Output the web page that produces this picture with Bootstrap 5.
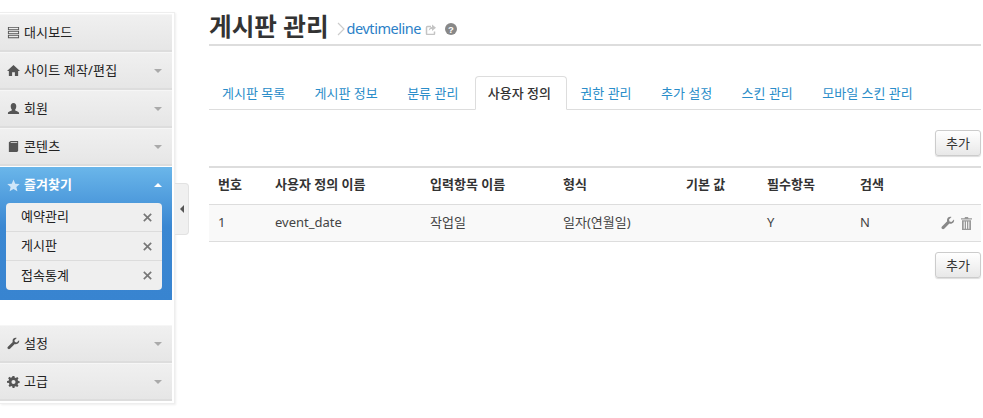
<!DOCTYPE html>
<html lang="ko">
<head>
<meta charset="UTF-8">
<title>게시판 관리</title>
<link href="https://cdn.jsdelivr.net/npm/bootstrap@5.3.2/dist/css/bootstrap.min.css" rel="stylesheet">
<style>
  body { font-family: "Noto Sans", "Noto Sans CJK KR", sans-serif; font-size: 13px; color: #333; background: #fff; height: 418px; overflow: hidden; }
  .page-wrap { height: 418px; }
  .side-col { width: 175px; flex: none; margin-top: 12px; height: 392px; padding: 1px 2px 3px 0; border-right: 1px solid #eee; border-bottom: 1px solid #eee; border-top: 1px solid #eee; box-shadow: 1px 1px 2px #eee; }
  .side-item { height: 38px; padding: 0 10px 0 7px; background: linear-gradient(#f0f0f0, #e6e6e6); border-bottom: 2px solid #ddd; border-top: 1px solid #f6f6f6; color: #222; font-size: 13px; letter-spacing: .15px; }
  .side-item svg { width: 13px; height: 13px; fill: #555; margin-right: 4px; flex: none; }
  .caret-down { width: 0; height: 0; border-left: 4px solid transparent; border-right: 4px solid transparent; border-top: 4px solid #aaa; }
  .caret-up { width: 0; height: 0; border-left: 4px solid transparent; border-right: 4px solid transparent; border-bottom: 4px solid #fff; }
  .fav-box { height: 133px; background: linear-gradient(#6ab6ea, #3a87d2 45%, #3884d0); padding: 0 10px 0 6px; margin-top: 1px; }
  .fav-head { height: 36px; padding: 0 0 0 1px; color: #fff; font-weight: 700; }
  .fav-head svg { width: 13px; height: 13px; fill: #cfe6f8; margin-right: 4px; }
  .fav-list { background: #efefef; border-radius: 4px; }
  .fav-row { height: 29px; padding: 0 10px 0 15px; border-bottom: 1px solid #dcdcdc; color: #222; }
  .fav-row:last-child { border-bottom: 0; }
  .fav-row svg { width: 9px; height: 9px; stroke: #777; stroke-width: 2; }
  .side-gap { height: 25px; }
  .fold-btn { width: 14px; height: 52px; margin-top: 183px; flex: none; background: #f0f0f0; border: 1px solid #e2e2e2; border-left: 0; border-radius: 0 4px 4px 0; }
  .fold-btn i { display: block; width: 0; height: 0; border-top: 4px solid transparent; border-bottom: 4px solid transparent; border-right: 4px solid #555; }
  .main-col { width: 772px; margin-left: 20px; flex: none; }
  .title-bar { height: 34px; margin-top: 12px; padding-bottom: 2px; border-bottom: 2px solid #ddd; }
  .title-bar h1 { font-size: 24.6px; font-weight: 700; margin: 0 4px 0 0; color: #333; line-height: 30px; }
  .title-link { color: #2b7fc7; font-size: 14.5px; text-decoration: none; letter-spacing: -0.45px; margin: 4px 0 0 -2px; }
  .title-bar svg { flex: none; margin-top: 4px; }
  .help-icon { margin-left: 5px; }
  .tab-strip { margin-top: 30px; height: 34px; border-bottom: 1px solid #ddd; flex-wrap: nowrap; }
  .tab-strip .nav-link { height: 34px; padding: 6px 15px 0 12px; margin-right: .4px; color: #2a8dc9; font-size: 13px; border-radius: 4px 4px 0 0; line-height: 20px; white-space: nowrap; }
  .tab-strip .nav-link.active { color: #333; font-weight: 500; border-color: #ddd #ddd #fff; }
  .add-btn { font-size: 13px; padding: 0; width: 46px; height: 26px; line-height: 24px; color: #333; background: linear-gradient(#fff, #e8e8e8); border: 1px solid #ccc; border-radius: 3px; box-shadow: 0 1px 1px #ddd; }
  .top-tools { margin-top: 20px; height: 36px; }
  .bottom-tools { margin-top: 10px; }
  .field-table { table-layout: fixed; width: 772px; margin: 0; border-top: 2px solid #ddd; font-size: 13px; }
  .field-table th { height: 37px; padding: 0 9px 2px; font-weight: 700; color: #333; border-bottom: 1px solid #ddd; vertical-align: middle; }
  .field-table td { height: 37px; padding: 0 9px; background: #f9f9f9; color: #444; border-bottom: 1px solid #ddd; vertical-align: middle; box-shadow: none; }
  .act-wrench { width: 14px; height: 14px; fill: #888; margin-right: 3px; }
  .act-trash { width: 11px; height: 13px; fill: #999; }
</style>
</head>
<body>
<div class="page-wrap d-flex">
  <div class="side-col">
    <div class="side-item d-flex align-items-center">
      <svg viewBox="0 0 14 14"><path fill-rule="evenodd" d="M1 1h12v3.500H1zM2 2v1.500h10V2zM1 5.300h12v3.500H1zM2 6.300v1.500h10V6.300zM1 9.600h12v3.500H1zM2 10.600v1.500h10v-1.500z"/></svg><span>대시보드</span>
    </div>
    <div class="side-item d-flex align-items-center justify-content-between">
      <span class="d-flex align-items-center"><svg viewBox="0 0 14 14"><path d="M7 1 0 7.500h2V13h3.500V9h3v4H12V7.500h2z"/></svg>사이트 제작/편집</span><i class="caret-down"></i>
    </div>
    <div class="side-item d-flex align-items-center justify-content-between">
      <span class="d-flex align-items-center"><svg viewBox="0 0 14 14"><path d="M7 1c2 0 3 1.500 3 3.500S9 8 8.500 8.500c.5 1 4.500 1.500 4.500 3.500v1H1v-1c0-2 4-2.500 4.500-3.500C5 8 4 6.500 4 4.500S5 1 7 1z"/></svg>회원</span><i class="caret-down"></i>
    </div>
    <div class="side-item d-flex align-items-center justify-content-between">
      <span class="d-flex align-items-center"><svg viewBox="0 0 14 14"><path d="M2 2.500 4 1h8v10.500L11 13H2zM3.500 3H11v-.8H4.500z" fill-rule="evenodd"/></svg>콘텐츠</span><i class="caret-down"></i>
    </div>
    <div class="fav-box">
      <div class="fav-head d-flex align-items-center justify-content-between">
        <span class="d-flex align-items-center"><svg viewBox="0 0 14 14"><path d="m7 .5 1.900 4.500 4.800.4-3.600 3.200 1.100 4.700L7 10.800l-4.200 2.500 1.100-4.700L.3 5.400 5.100 5z"/></svg>즐겨찾기</span><i class="caret-up"></i>
      </div>
      <div class="fav-list">
        <div class="fav-row d-flex align-items-center justify-content-between"><span>예약관리</span><svg viewBox="0 0 11 11"><path d="m1 1 9 9M10 1l-9 9"/></svg></div>
        <div class="fav-row d-flex align-items-center justify-content-between"><span>게시판</span><svg viewBox="0 0 11 11"><path d="m1 1 9 9M10 1l-9 9"/></svg></div>
        <div class="fav-row d-flex align-items-center justify-content-between"><span>접속통계</span><svg viewBox="0 0 11 11"><path d="m1 1 9 9M10 1l-9 9"/></svg></div>
      </div>
    </div>
    <div class="side-gap"></div>
    <div class="side-item d-flex align-items-center justify-content-between">
      <span class="d-flex align-items-center"><svg viewBox="0 0 14 14"><path d="M13 3.500 10.500 6 8.500 5.500 8 3.500 10.500 1C8.500.2 6 1.500 6 4c0 .5 0 1 .2 1.300L1 10.500c-.7.7-.7 1.600 0 2.200s1.500.6 2.200 0L8.400 7.500C11 8.500 13.800 6 13 3.500z"/></svg>설정</span><i class="caret-down"></i>
    </div>
    <div class="side-item d-flex align-items-center justify-content-between">
      <span class="d-flex align-items-center"><svg viewBox="0 0 14 14"><path fill-rule="evenodd" d="M6 1h2l.3 1.700 1.200.5L11 2.200l1.400 1.400-1 1.500.5 1.200 1.700.3v2l-1.700.3-.5 1.200 1 1.500-1.400 1.400-1.500-1-1.200.5L8 14H6l-.3-1.700-1.200-.5-1.500 1-1.400-1.400 1-1.500-.5-1.200L0 8.400v-2l1.700-.3.500-1.200-1-1.500 1.400-1.400 1.500 1 1.200-.5zM7 5.300a2.200 2.200 0 1 0 0 4.400 2.200 2.200 0 0 0 0-4.400z"/></svg>고급</span><i class="caret-down"></i>
    </div>
  </div>
  <div class="fold-btn d-flex align-items-center justify-content-center"><i></i></div>
  <div class="main-col">
    <div class="title-bar d-flex align-items-center gap-1">
      <h1>게시판 관리</h1>
      <svg width="8" height="14" viewBox="0 0 8 14"><path d="m1 1 6 6-6 6" fill="none" stroke="#ccc" stroke-width="1.200"/></svg>
      <a class="title-link" href="#">devtimeline</a>
      <svg width="11" height="11" viewBox="0 0 11 11"><path d="M6 2.500H2.500a1 1 0 0 0-1 1v6a1 1 0 0 0 1 1h6a1 1 0 0 0 1-1V7.500" fill="none" stroke="#c4c4c4" stroke-width="1.500"/><path d="M7 .5l4 3.200-4 3.200V5C5.500 5 4.500 5.500 3.800 7c0-2.500 1.200-3.800 3.200-4z" fill="#c4c4c4"/></svg>
      <svg class="help-icon" width="12" height="12" viewBox="0 0 12 12"><circle cx="6" cy="6" r="6" fill="#888"/><text x="6" y="9.500" text-anchor="middle" font-size="9.500" font-weight="700" fill="#fff" font-family="Liberation Sans, sans-serif">?</text></svg>
    </div>
    <ul class="nav nav-tabs tab-strip">
      <li class="nav-item"><a class="nav-link" href="#">게시판 목록</a></li>
      <li class="nav-item"><a class="nav-link" href="#">게시판 정보</a></li>
      <li class="nav-item"><a class="nav-link" href="#">분류 관리</a></li>
      <li class="nav-item"><a class="nav-link active" href="#">사용자 정의</a></li>
      <li class="nav-item"><a class="nav-link" href="#">권한 관리</a></li>
      <li class="nav-item"><a class="nav-link" href="#">추가 설정</a></li>
      <li class="nav-item"><a class="nav-link" href="#">스킨 관리</a></li>
      <li class="nav-item"><a class="nav-link" href="#">모바일 스킨 관리</a></li>
    </ul>
    <div class="top-tools d-flex justify-content-end align-items-start"><button class="btn add-btn" type="button">추가</button></div>
    <table class="table field-table">
      <colgroup><col style="width:57px"><col style="width:155px"><col style="width:133px"><col style="width:123px"><col style="width:81px"><col style="width:93px"><col style="width:60px"><col></colgroup>
      <thead>
        <tr><th>번호</th><th>사용자 정의 이름</th><th>입력항목 이름</th><th>형식</th><th>기본 값</th><th>필수항목</th><th>검색</th><th></th></tr>
      </thead>
      <tbody>
        <tr>
          <td>1</td><td>event_date</td><td>작업일</td><td>일자(연월일)</td><td></td><td>Y</td><td>N</td>
          <td class="text-end text-nowrap">
            <svg class="act-wrench" viewBox="0 0 14 14"><path d="M13 3.500 10.500 6 8.500 5.500 8 3.500 10.500 1C8.500.2 6 1.500 6 4c0 .5 0 1 .2 1.300L1 10.500c-.7.7-.7 1.600 0 2.200s1.500.6 2.200 0L8.400 7.500C11 8.500 13.800 6 13 3.500z"/></svg>
            <svg class="act-trash" viewBox="0 0 11 13"><path fill-rule="evenodd" d="M4 0h3l.5 1.200H11v1.300H0V1.200h3.500zM1 3.200h9V13H1zM2.700 4.500v7.200h1V4.500zM5 4.500v7.200h1V4.500zM7.300 4.500v7.200h1V4.500z"/></svg>
          </td>
        </tr>
      </tbody>
    </table>
    <div class="bottom-tools d-flex justify-content-end"><button class="btn add-btn" type="button">추가</button></div>
  </div>
</div>
<script src="https://cdn.jsdelivr.net/npm/bootstrap@5.3.2/dist/js/bootstrap.bundle.min.js"></script>
</body>
</html>
